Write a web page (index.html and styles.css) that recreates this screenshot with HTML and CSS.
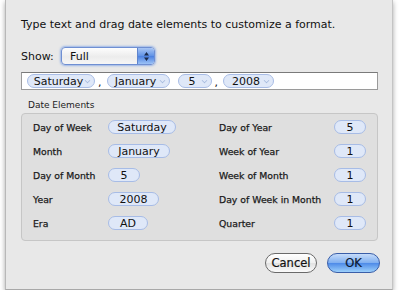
FILE: index.html
```html
<!DOCTYPE html>
<html lang="en">
<head>
    <meta charset="UTF-8">
    <title>Date Format</title>
    <link rel="stylesheet" href="styles.css">
</head>
<body>
    <div class="sheet">
        <p class="intro">Type text and drag date elements to customize a format.</p>

        <div class="show-row">
            <span class="show-label">Show:</span>
            <div class="popup">
                <span class="popup-value">Full</span>
                <span class="stepper">
                    <svg width="7" height="11" viewBox="0 0 7 11"><path d="M3.5 1 L6 4.5 H1 Z M3.5 10 L6 6.5 H1 Z" fill="#1a2a4a"/></svg>
                </span>
            </div>
        </div>

        <div class="token-field">
            <span class="token t-sat">Saturday<i class="chev"></i></span>
            <span class="sep">,</span>
            <span class="token t-jan">January<i class="chev"></i></span>
            <span class="token t-day">5<i class="chev"></i></span>
            <span class="sep">,</span>
            <span class="token t-year">2008<i class="chev"></i></span>
        </div>

        <div class="group-title">Date Elements</div>
        <div class="group">
            <span class="lbl">Day of Week</span><span class="val"><b class="pill w68">Saturday</b></span>
            <span class="lbl">Day of Year</span><span class="val"><b class="pill w32">5</b></span>

            <span class="lbl">Month</span><span class="val"><b class="pill w62">January</b></span>
            <span class="lbl">Week of Year</span><span class="val"><b class="pill w32">1</b></span>

            <span class="lbl">Day of Month</span><span class="val"><b class="pill w32">5</b></span>
            <span class="lbl">Week of Month</span><span class="val"><b class="pill w32">1</b></span>

            <span class="lbl">Year</span><span class="val"><b class="pill w51">2008</b></span>
            <span class="lbl">Day of Week in Month</span><span class="val"><b class="pill w32">1</b></span>

            <span class="lbl">Era</span><span class="val"><b class="pill w40">AD</b></span>
            <span class="lbl">Quarter</span><span class="val"><b class="pill w32">1</b></span>
        </div>

        <div class="buttons">
            <button class="btn cancel">Cancel</button>
            <button class="btn ok">OK</button>
        </div>
    </div>
</body>
</html>
```

FILE: styles.css
```css
body {
    margin: 0;
    background: #fff;
    font-family: "DejaVu Sans", sans-serif;
    color: #111;
}
.sheet {
    box-sizing: border-box;
    margin-left: 5px;
    width: 388px;
    height: 290px;
    background: #e8e8e8;
    border-left: 1px solid #b8b8b8;
    border-right: 1px solid #c4c4c4;
    border-bottom: 1px solid #a8a8a8;
    box-shadow: 0 2px 5px rgba(0, 0, 0, 0.35);
    padding: 18px 14px 0 15px;
}
.intro {
    margin: 0;
    font-size: 11px;
    line-height: 14px;
}
.show-row {
    display: flex;
    align-items: center;
    margin-top: 15px;
    height: 18px;
}
.show-label {
    font-size: 11px;
    width: 40px;
}
.popup {
    box-sizing: border-box;
    display: flex;
    align-items: center;
    width: 94px;
    height: 18px;
    border: 1px solid #6f8fd2;
    border-radius: 4px;
    box-shadow: 0 0 2px 1px rgba(90, 140, 230, 0.55);
    background: linear-gradient(#fdfdfd, #ececec 55%, #f6f6f6);
    overflow: hidden;
}
.popup-value {
    flex: 1;
    font-size: 11px;
    padding-left: 8px;
}
.stepper {
    display: flex;
    align-items: center;
    justify-content: center;
    width: 16px;
    height: 100%;
    background: linear-gradient(#a9c6f4, #5f92e6 50%, #4a80e0 51%, #9cc2f6);
    border-left: 1px solid #5f84cc;
}
.token-field {
    box-sizing: border-box;
    display: flex;
    align-items: center;
    margin-top: 7px;
    height: 18px;
    background: #fff;
    border: 1px solid #9a9a9a;
    border-top-color: #7a7a7a;
    padding-left: 5px;
}
.token {
    position: relative;
    box-sizing: border-box;
    height: 14px;
    padding: 1px 5px 0 0;
    line-height: 12px;
    font-size: 11px;
    text-align: center;
    margin-right: 8px;
    border: 1px solid #a9bde6;
    border-radius: 7px;
    background: #dfe8f8;
}
.t-sat { width: 68px; }
.t-jan { width: 63px; }
.t-day { width: 34px; }
.t-year { width: 51px; }
.chev {
    position: absolute;
    right: 4px;
    top: 3px;
    width: 4px;
    height: 4px;
    border-right: 1px solid #a4b8dc;
    border-bottom: 1px solid #a4b8dc;
    transform: rotate(45deg) scale(0.8);
}
.sep {
    font-size: 11px;
    margin: 2px 5px 0 -5px;
}
.group-title {
    font-size: 9px;
    margin: 9px 0 0 7px;
    line-height: 12px;
    color: #222;
}
.group {
    box-sizing: border-box;
    display: grid;
    grid-template-columns: 75px 111px 115px 1fr;
    grid-auto-rows: 24px;
    align-items: center;
    margin-top: 2px;
    height: 128px;
    padding: 1px 0 0 11px;
    background: #dfdfdf;
    border: 1px solid #c6c6c6;
    border-radius: 4px;
}
.lbl {
    font-size: 9.3px;
    color: #1a1a1a;
    -webkit-text-stroke: 0.25px #1a1a1a;
}
.val {
    display: flex;
}
.pill {
    box-sizing: border-box;
    height: 14px;
    padding-top: 1px;
    line-height: 12px;
    font-size: 11px;
    font-weight: normal;
    text-align: center;
    border: 1px solid #a7bce6;
    border-radius: 7px;
    background: #dfe8f8;
}
.w68 { width: 68px; }
.w62 { width: 62px; }
.w51 { width: 51px; }
.w40 { width: 40px; }
.w32 { width: 32px; }
.buttons {
    display: flex;
    justify-content: flex-end;
    gap: 10px;
    margin-top: 12px;
    margin-right: -2px;
}
.btn {
    box-sizing: border-box;
    height: 20px;
    font-family: "DejaVu Sans", sans-serif;
    font-size: 11.5px;
    border-radius: 10px;
    padding: 0;
    -webkit-text-stroke: 0.2px currentColor;
}
.cancel {
    width: 52px;
    border: 1px solid #6a6a6a;
    background: linear-gradient(#ffffff, #f0f0f0 50%, #e2e2e2 51%, #fafafa);
    color: #111;
}
.ok {
    width: 53px;
    border: 1px solid #3a5ea8;
    background: linear-gradient(#c6dcfa, #7eaef0 50%, #4d8ae8 51%, #9cd0fb);
    color: #0c1830;
}
```
